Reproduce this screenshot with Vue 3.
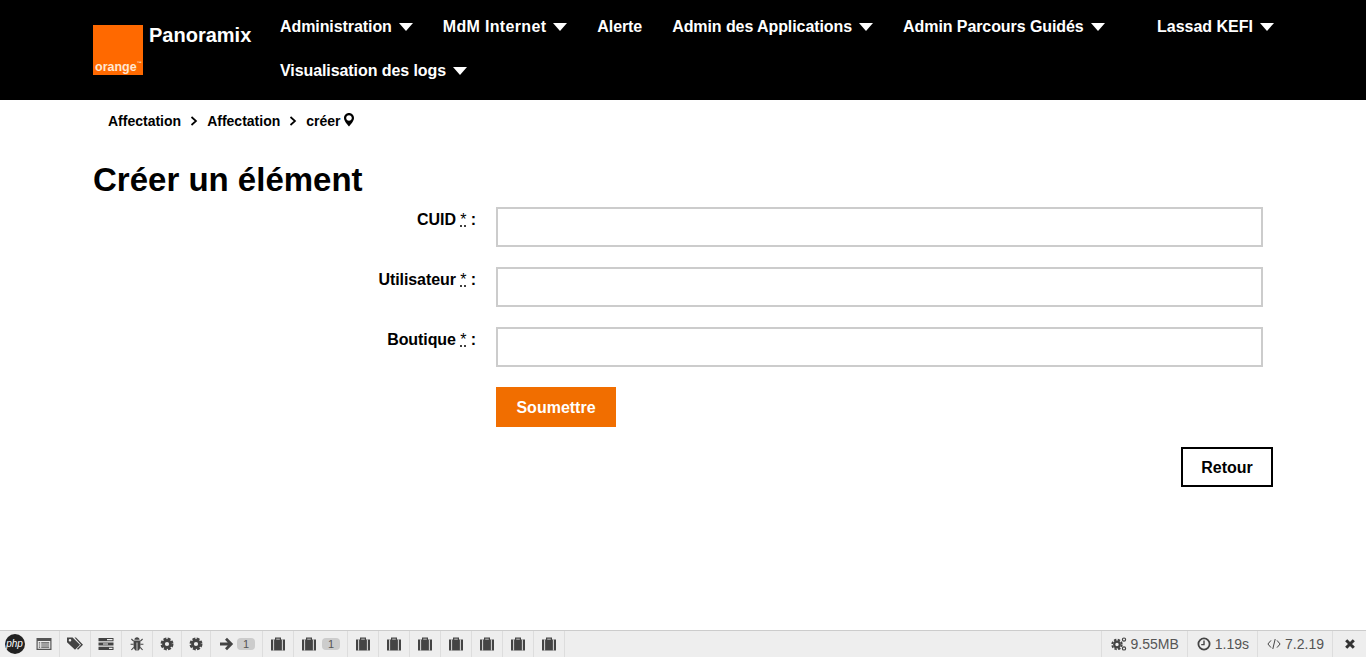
<script setup>
const menu = [
  { label: "Administration", caret: true },
  { label: "MdM Internet", caret: true, wide: true },
  { label: "Alerte", caret: false },
  { label: "Admin des Applications", caret: true },
  { label: "Admin Parcours Guidés", caret: true },
  { label: "Visualisation des logs", caret: true },
];

const fields = ["CUID", "Utilisateur", "Boutique"];

// icones de la barre de debug, dans l'ordre
const debugTabs = [
  { icon: "list" },
  { icon: "tags" },
  { icon: "server" },
  { icon: "bug" },
  { icon: "cog" },
  { icon: "cog" },
  { icon: "arrow", badge: 1 },
  { icon: "case" },
  { icon: "case", badge: 1 },
  { icon: "case" },
  { icon: "case" },
  { icon: "case" },
  { icon: "case" },
  { icon: "case" },
  { icon: "case" },
  { icon: "case" },
];
</script>

<template>
  <div class="page">
    <header class="topbar">
      <div class="logo">
        <span class="logo-text">orange<sup class="logo-tm">™</sup></span>
      </div>
      <div class="brand">Panoramix</div>
      <nav class="menu">
        <a
          v-for="item in menu"
          :key="item.label"
          :class="['menu-item', { wide: item.wide }]"
        >
          {{ item.label }}
          <span v-if="item.caret" class="caret"></span>
        </a>
      </nav>
      <a class="menu-item user">Lassad KEFI <span class="caret"></span></a>
    </header>

    <main class="content">
      <div class="breadcrumb">
        <span>Affectation</span>
        <svg class="chevron" viewBox="0 0 8 10" width="8" height="10">
          <path d="M1.5 1 L6 5 L1.5 9" fill="none" stroke="#000" stroke-width="1.7" />
        </svg>
        <span>Affectation</span>
        <svg class="chevron" viewBox="0 0 8 10" width="8" height="10">
          <path d="M1.5 1 L6 5 L1.5 9" fill="none" stroke="#000" stroke-width="1.7" />
        </svg>
        <span>créer</span>
        <svg class="pin" viewBox="0 0 10 14" width="10" height="14">
          <path
            fill-rule="evenodd"
            d="M5 0 C2.2 0 0 2.2 0 5 C0 8 3.4 11.6 5 13.6 C6.6 11.6 10 8 10 5 C10 2.2 7.8 0 5 0 Z M5 2.2 C6.6 2.2 7.8 3.4 7.8 5 C7.8 6.6 6.6 7.8 5 7.8 C3.4 7.8 2.2 6.6 2.2 5 C2.2 3.4 3.4 2.2 5 2.2 Z"
          />
        </svg>
      </div>

      <h1 class="title">Créer un élément</h1>

      <form class="form" @submit.prevent>
        <template v-for="field in fields" :key="field">
          <label class="field-label">{{ field }} <abbr class="req">*</abbr> :</label>
          <input class="field-input" type="text" />
        </template>
        <button class="btn-submit" type="submit">Soumettre</button>
      </form>

      <div class="back-row">
        <a class="btn-back">Retour</a>
      </div>
    </main>

    <footer class="debugbar">
      <div class="php-logo"><span>php</span></div>
      <div v-for="(tab, i) in debugTabs" :key="i" :class="['debug-tab', 'tab-' + tab.icon]">
        <svg class="debug-icon" viewBox="0 0 16 16">
          <template v-if="tab.icon === 'list'">
            <path
              fill="#555"
              fill-rule="evenodd"
              d="M0.5 2 H15.5 V14 H0.5 Z M1.7 5 V12.8 H14.3 V5 Z"
            />
            <path fill="#555" d="M2.8 6.2 H4.2 V7.4 H2.8 Z M5.2 6.2 H13.2 V7.4 H5.2 Z M2.8 8.4 H4.2 V9.6 H2.8 Z M5.2 8.4 H13.2 V9.6 H5.2 Z M2.8 10.6 H4.2 V11.8 H2.8 Z M5.2 10.6 H13.2 V11.8 H5.2 Z" />
          </template>
          <template v-else-if="tab.icon === 'tags'">
            <path fill="#444" fill-rule="evenodd" d="M0 1.5 H5.6 L13 8.7 L8 13.7 L0 6.3 Z M3 2.9 A1.3 1.3 0 1 0 3 5.5 A1.3 1.3 0 1 0 3 2.9 Z" />
            <path fill="#444" d="M7.5 1.5 H9 L16 8.7 L11 13.7 L10 12.7 L14 8.7 Z" />
          </template>
          <template v-else-if="tab.icon === 'server'">
            <path fill="#444" d="M0.5 2 H15.5 V5.2 H0.5 Z M0.5 6.4 H15.5 V9.6 H0.5 Z M0.5 10.8 H15.5 V14 H0.5 Z" />
            <path fill="#eee" d="M9 3 H14.5 V4.2 H9 Z M5 7.4 H10 V8.6 H5 Z M11 11.8 H14.5 V13 H11 Z" />
          </template>
          <template v-else-if="tab.icon === 'bug'">
            <path fill="#444" d="M5.4 3.8 C5.4 2 6.6 1.2 8 1.2 C9.4 1.2 10.6 2 10.6 3.8 Z M4.6 4.6 H11.4 V10 C11.4 13 9.8 14.6 8.4 14.8 V6.5 H7.6 V14.8 C6.2 14.6 4.6 13 4.6 10 Z" />
            <path stroke="#444" stroke-width="1.1" fill="none" d="M4.6 5.2 L2.4 3 M11.4 5.2 L13.6 3 M4.6 8.2 H1.6 M11.4 8.2 H14.4 M4.8 11.4 L2.4 14 M11.2 11.4 L13.6 14" />
          </template>
          <template v-else-if="tab.icon === 'cog'">
            <circle cx="8" cy="8" r="4" fill="none" stroke="#444" stroke-width="3.2" />
            <circle cx="8" cy="8" r="6.2" fill="none" stroke="#444" stroke-width="2.4" stroke-dasharray="3.4 1.47" />
          </template>
          <template v-else-if="tab.icon === 'arrow'">
            <path fill="none" stroke="#444" stroke-width="2.8" d="M2 8 H13 M8 2.8 L13.2 8 L8 13.2" />
          </template>
          <template v-else>
            <path fill="#444" fill-rule="evenodd" d="M5 1.6 H11 V3.6 H15 V14.4 H1 V3.6 H5 Z M6.2 2.8 V3.6 H9.8 V2.8 Z" />
            <path fill="#eee" d="M3.2 3.6 H4.1 V14.4 H3.2 Z M11.9 3.6 H12.8 V14.4 H11.9 Z" />
          </template>
        </svg>
        <span v-if="tab.badge" class="debug-badge">{{ tab.badge }}</span>
      </div>

      <div class="debug-right">
        <div class="debug-stat">
          <svg viewBox="0 0 16 16" width="16" height="16">
            <circle cx="6" cy="8.5" r="2.8" fill="none" stroke="#444" stroke-width="2.2" />
            <circle cx="6" cy="8.5" r="4.8" fill="none" stroke="#444" stroke-width="1.8" stroke-dasharray="2.4 1.4" />
            <circle cx="13" cy="3.6" r="1.6" fill="none" stroke="#444" stroke-width="1.2" />
            <circle cx="13" cy="12.4" r="1.6" fill="none" stroke="#444" stroke-width="1.2" />
          </svg>
          9.55MB
        </div>
        <div class="debug-stat">
          <svg viewBox="0 0 14 14" width="14" height="14">
            <circle cx="7" cy="7" r="5.6" fill="none" stroke="#444" stroke-width="1.8" />
            <path d="M7 3.6 V7.6 H4.2" fill="none" stroke="#444" stroke-width="1.4" />
          </svg>
          1.19s
        </div>
        <div class="debug-stat">
          <svg viewBox="0 0 14 12" width="14" height="12">
            <path d="M4 2.4 L0.9 6 L4 9.6 M10 2.4 L13.1 6 L10 9.6 M8.2 1 L5.8 11" fill="none" stroke="#444" stroke-width="1" />
          </svg>
          7.2.19
        </div>
        <div class="debug-close">
          <svg viewBox="0 0 12 12" width="12" height="12">
            <path d="M2.2 2.2 L9.8 9.8 M9.8 2.2 L2.2 9.8" fill="none" stroke="#333" stroke-width="3" />
          </svg>
        </div>
      </div>
    </footer>
  </div>
</template>

<style>
body {
  margin: 0;
}
</style>

<style scoped>
.page {
  min-height: 100vh;
  display: flex;
  flex-direction: column;
  font-family: "Liberation Sans", Arial, sans-serif;
  color: #000;
}

.topbar {
  height: 100px;
  box-sizing: border-box;
  background: #000;
  color: #fff;
  display: flex;
  align-items: flex-start;
  padding: 5px 92px 0 93px;
}

.logo {
  width: 50px;
  height: 50px;
  margin-top: 20px;
  flex-shrink: 0;
  background: #ff6900;
  display: flex;
  align-items: flex-end;
  overflow: hidden;
}

.logo-text {
  font-size: 12.5px;
  font-weight: bold;
  line-height: 16px;
  padding-left: 2px;
  color: #ffe6d0;
  white-space: nowrap;
}

.logo-tm {
  font-size: 5px;
  line-height: 0;
  vertical-align: 6px;
}

.brand {
  width: 137px;
  flex-shrink: 0;
  padding-left: 6px;
  box-sizing: border-box;
  margin-top: 19px;
  font-size: 20px;
  font-weight: bold;
  line-height: 22px;
}

.menu {
  width: 846px;
  display: flex;
  flex-wrap: wrap;
  column-gap: 30px;
}

.menu-item {
  height: 44px;
  display: flex;
  align-items: center;
  gap: 7px;
  font-size: 16px;
  letter-spacing: -0.08px;
  font-weight: bold;
  white-space: nowrap;
}

.menu-item.wide {
  letter-spacing: 0.33px;
}

.user {
  margin-left: auto;
  letter-spacing: 0;
}

.caret {
  width: 0;
  height: 0;
  border-left: 7.5px solid transparent;
  border-right: 7.5px solid transparent;
  border-top: 8px solid #fff;
}

.content {
  flex: 1;
  padding: 0 93px;
}

.breadcrumb {
  height: 40px;
  box-sizing: border-box;
  padding: 2px 0 0 15px;
  display: flex;
  align-items: center;
  font-size: 14px;
  font-weight: bold;
}

.chevron {
  margin: 0 9px;
}

.pin {
  margin: -2px 0 0 3px;
}

.title {
  margin: 20px 0 7px;
  font-size: 33px;
  line-height: 40px;
  font-weight: bold;
}

.form {
  display: grid;
  grid-template-columns: 1fr 767px;
  column-gap: 20px;
  row-gap: 20px;
  padding-right: 10px;
}

.field-label {
  text-align: right;
  font-size: 16px;
  letter-spacing: -0.08px;
  font-weight: bold;
  line-height: 26px;
}

.req {
  text-decoration: underline dotted;
  font-weight: normal;
}

.field-input {
  height: 40px;
  box-sizing: border-box;
  border: 2px solid #ccc;
  background: #fff;
  outline: none;
}

.btn-submit {
  grid-column: 2;
  justify-self: start;
  width: 120px;
  height: 40px;
  padding: 1px 0 0;
  border: 0;
  background: #f16e00;
  color: #fff;
  font-family: inherit;
  font-size: 16px;
  font-weight: bold;
}

.back-row {
  display: flex;
  justify-content: flex-end;
  margin-top: 20px;
}

.btn-back {
  width: 92px;
  height: 40px;
  padding-top: 1px;
  box-sizing: border-box;
  border: 2px solid #000;
  display: flex;
  align-items: center;
  justify-content: center;
  font-size: 16px;
  font-weight: bold;
}

.debugbar {
  height: 27px;
  box-sizing: border-box;
  border-top: 1px solid #ccc;
  background: #eee;
  display: flex;
  align-items: stretch;
  font-size: 14px;
  color: #555;
}

.php-logo {
  width: 29px;
  display: flex;
  align-items: center;
  justify-content: center;
}

.php-logo span {
  width: 20px;
  height: 20px;
  border-radius: 50%;
  background: #222;
  color: #fff;
  font-size: 10px;
  font-style: italic;
  line-height: 19px;
  text-align: center;
}

.debug-tab {
  padding: 0 7px;
  border-right: 1px solid #ddd;
  display: flex;
  align-items: center;
  gap: 3px;
}

.debug-icon {
  width: 16px;
  height: 16px;
  flex-shrink: 0;
}

.tab-cog .debug-icon {
  width: 14px;
  height: 14px;
}

.debug-badge {
  min-width: 18px;
  height: 12px;
  border-radius: 4px;
  background: #ccc;
  font-size: 11px;
  line-height: 12px;
  text-align: center;
}

.tab-case .debug-badge {
  margin-left: 2px;
}

.debug-right {
  margin-left: auto;
  display: flex;
}

.debug-stat {
  padding: 0 8px 0 9px;
  border-left: 1px solid #ddd;
  display: flex;
  align-items: center;
  gap: 4px;
}

.debug-close {
  width: 33px;
  border-left: 1px solid #ddd;
  display: flex;
  align-items: center;
  justify-content: center;
}
</style>
